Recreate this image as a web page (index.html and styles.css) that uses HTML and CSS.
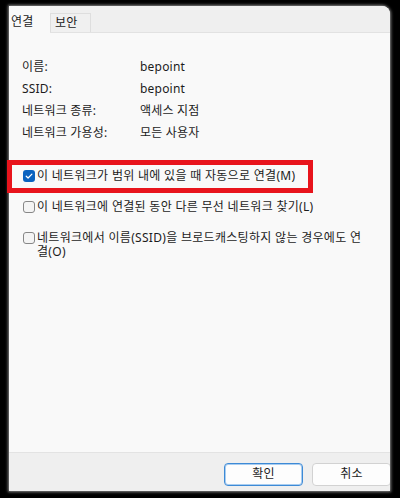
FILE: index.html
```html
<!DOCTYPE html>
<html lang="ko">
<head>
<meta charset="utf-8">
<link rel="stylesheet" href="styles.css">
</head>
<body>
<div class="window">
  <div class="tabs">
    <div class="tab active">연결</div>
    <div class="tab">보안</div>
  </div>
  <div class="content">
    <div class="info">
      <span>이름:</span><span>bepoint</span>
      <span>SSID:</span><span>bepoint</span>
      <span>네트워크 종류:</span><span>액세스 지점</span>
      <span>네트워크 가용성:</span><span>모든 사용자</span>
    </div>
    <div class="options">
      <div class="option">
        <span class="cb checked"><svg viewBox="0 0 12 12" width="12" height="12"><path d="M3.2 6.2 L5.1 8 L8.9 4.2" fill="none" stroke="#fff" stroke-width="1.2" stroke-linecap="round" stroke-linejoin="round"/></svg></span>
        <span class="label">이 네트워크가 범위 내에 있을 때 자동으로 연결(M)</span>
      </div>
      <div class="option">
        <span class="cb"></span>
        <span class="label">이 네트워크에 연결된 동안 다른 무선 네트워크 찾기(L)</span>
      </div>
      <div class="option">
        <span class="cb"></span>
        <span class="label wrap">네트워크에서 이름(SSID)을 브로드캐스팅하지 않는 경우에도 연결(O)</span>
      </div>
    </div>
  </div>
  <div class="footer">
    <div class="btn primary">확인</div>
    <div class="btn">취소</div>
  </div>
</div>
<div class="highlight"></div>
</body>
</html>
```
FILE: styles.css
```css
html, body {
  margin: 0;
  padding: 0;
}
body {
  width: 400px;
  height: 498px;
  background: #000;
  overflow: hidden;
  position: relative;
  font-family: "Noto Sans", "Noto Sans CJK KR", sans-serif;
  font-size: 12px;
  letter-spacing: 0.2px;
  color: #1c1c1c;
}
.window {
  margin: 6px 0 0 9px;
  width: 381px;
  height: 485px;
  background: #f9f9f9;
  border-top-right-radius: 8px;
  overflow: hidden;
  display: flex;
  flex-direction: column;
  box-shadow: 0 0 3px 1px rgba(170, 170, 170, 0.8);
}
.tabs {
  height: 26px;
  background: #efefef;
  border-bottom: 1px solid #e2e2e2;
  display: flex;
  align-items: flex-end;
}
.tab {
  box-sizing: border-box;
  width: 41px;
  height: 19px;
  padding: 2px 0 0 4px;
  line-height: 14px;
  background: #f0f0f0;
  border: 1px solid #dedede;
  border-bottom: none;
}
.tab.active {
  height: 27px;
  margin-bottom: -1px;
  padding: 9px 0 0 2px;
  background: #f9f9f9;
  border: none;
}
.content {
  flex: 1;
  padding: 22px 0 0 13px;
}
.info {
  display: grid;
  grid-template-columns: 118px auto;
  grid-auto-rows: 22px;
  align-items: center;
}
.options {
  margin-top: 26px;
  display: flex;
  flex-direction: column;
  gap: 17px;
}
.option {
  display: flex;
  align-items: flex-start;
  gap: 2px;
  padding-left: 1px;
  line-height: 14px;
  letter-spacing: 0.3px;
}
.cb {
  box-sizing: border-box;
  flex: none;
  width: 12px;
  height: 12px;
  margin-top: 1px;
  border: 1px solid #878787;
  border-radius: 3px;
  background: #f4f4f4;
  display: flex;
}
.cb.checked {
  border: none;
  background: #0a62bf;
}
.label.wrap {
  width: 325px;
}
.footer {
  height: 28px;
  background: #efefef;
  border-top: 1px solid #e3e3e3;
  display: flex;
  gap: 9px;
  padding: 10px 0 0 215px;
}
.btn {
  box-sizing: border-box;
  flex: none;
  width: 79px;
  height: 23px;
  border: 1px solid #d2d2d2;
  border-radius: 4px;
  background: #fdfdfd;
  text-align: center;
  line-height: 20px;
}
.btn.primary {
  border-color: #3d8ad6;
  box-shadow: inset 0 0 0 1px #a9cdf0;
}
.highlight {
  position: absolute;
  left: 7px;
  top: 160px;
  width: 306px;
  height: 33px;
  box-sizing: border-box;
  border: 5px solid #e8141c;
}
```
